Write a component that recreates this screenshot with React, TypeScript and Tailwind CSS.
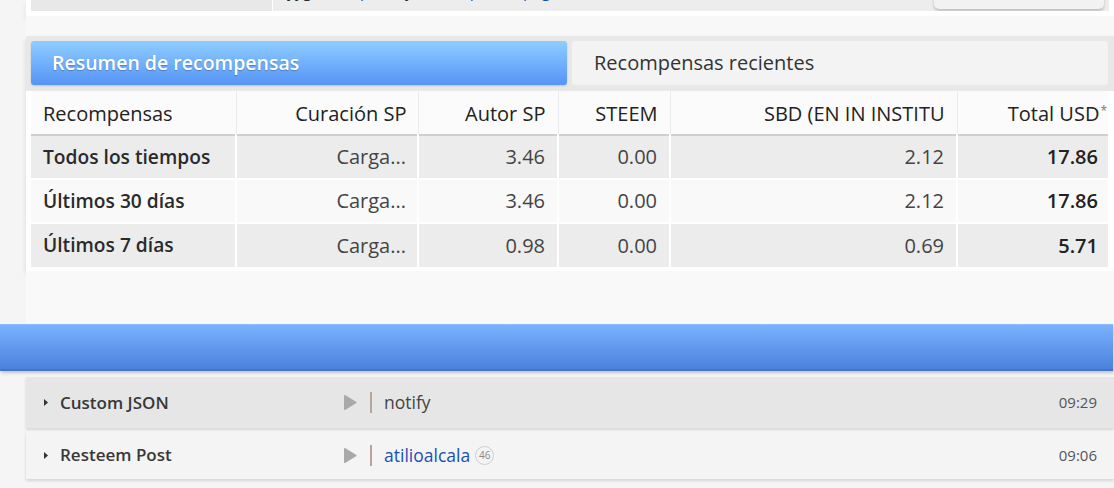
import React from "react";

const rows = [
  { label: "Todos los tiempos", cur: "Carga...", autor: "3.46", steem: "0.00", sbd: "2.12", total: "17.86", bg: "bg-[#ececec]" },
  { label: "Últimos 30 días", cur: "Carga...", autor: "3.46", steem: "0.00", sbd: "2.12", total: "17.86", bg: "bg-[#f9f9f9]" },
  { label: "Últimos 7 días", cur: "Carga...", autor: "0.98", steem: "0.00", sbd: "0.69", total: "5.71", bg: "bg-[#ececec]" },
];

const ops = [
  { name: "Custom JSON", target: "notify", link: false, time: "09:29", bg: "bg-[#e6e6e6]", h: "h-[51px]" },
  { name: "Resteem Post", target: "atilioalcala", link: true, rep: "46", time: "09:06", bg: "bg-[#f4f4f4]", h: "h-[48px]" },
];

function Caret() {
  return (
    <svg width="6" height="9" viewBox="0 0 6 9" className="shrink-0">
      <path d="M1 1 L5 4.5 L1 8 Z" fill="#333" />
    </svg>
  );
}

function Play() {
  return (
    <svg width="14" height="17" viewBox="0 0 14 17">
      <path d="M2 2 L12.5 8.5 L2 15 Z" fill="#a9a9a9" stroke="#a9a9a9" strokeWidth="2" strokeLinejoin="round" />
    </svg>
  );
}

export default function App() {
  return (
    <div className="min-h-screen w-[1114px] overflow-hidden bg-[#f5f5f5] font-['Open_Sans',sans-serif] text-[#333]">
      {/* top card, mostly scrolled away */}
      <div className="ml-[26px] w-[1088px] bg-white px-[5px] pb-[5px] shadow-[0_4px_6px_rgba(0,0,0,0.08)]">
        <div className="flex h-[11px] gap-px overflow-hidden">
          <div className="w-[241px] bg-[#e8e8e8]" />
          <div className="relative flex flex-1 bg-[#ededed]">
            <div className="-mt-[19px] ml-[14px] whitespace-nowrap text-[16px] leading-[20px] text-[#2a2a2a]">
              <span>yyg </span>
              <span className="text-[#b05a28]">(</span>
              <span className="text-[#1a4fb4]">hace poco,</span> y
              <span className="text-[#b05a28]"> (</span>
              <span className="text-[#1a4fb4]">recompensa, pago)</span>
              <span className="text-[#b05a28]"> ( </span>
              <span className="text-[#1a4fb4]">reciente)</span>
            </div>
            <div className="absolute right-[5px] bottom-[2px] h-[20px] w-[170px] rounded-b-[5px] bg-[#f2f2f2] shadow-[0_2px_3px_rgba(0,0,0,0.2)]" />
          </div>
        </div>
      </div>

      <div className="ml-[26px] h-[20px] bg-[#f8f8f8]" />

      {/* rewards card */}
      <div className="ml-[26px] w-[1088px] bg-white shadow-[0_3px_5px_rgba(0,0,0,0.12)]">
        <div className="flex gap-[5px] bg-[#e8e8e8] px-[5px] pt-[5px] pb-[6px]">
          <div className="flex h-[44px] w-[536px] items-center rounded-[3px] bg-gradient-to-b from-[#8fcdff] to-[#5694f6] pl-[21px] text-[19.5px] font-semibold text-white shadow-[0_1px_2px_rgba(0,0,0,0.15)] [text-shadow:0_1px_1px_rgba(0,0,0,0.25)]">
            Resumen de recompensas
          </div>
          <div className="mr-[1px] flex h-[44px] flex-1 items-center rounded-[3px] bg-[#f3f3f3] pl-[22px] text-[20px] text-[#333]">
            Recompensas recientes
          </div>
        </div>
        <div className="px-[5px] pb-[4px]">
          <table className="w-[1077px] table-fixed border-collapse text-[20px]">
            <colgroup>
              <col className="w-[205px]" />
              <col className="w-[182px]" />
              <col className="w-[140px]" />
              <col className="w-[112px]" />
              <col className="w-[287px]" />
              <col className="w-[151px]" />
            </colgroup>
            <thead>
              <tr className="h-[44px] border-b-2 border-[#cfcfcf] bg-[#fbfbfb] text-[#222]">
                <th className="border-r border-[#ececec] pt-[3px] pl-[12px] text-left font-normal">Recompensas</th>
                <th className="border-r border-[#ececec] pt-[3px] pr-[11px] text-right font-normal">Curación SP</th>
                <th className="border-r border-[#ececec] pt-[3px] pr-[12px] text-right font-normal">Autor SP</th>
                <th className="border-r border-[#ececec] pt-[3px] pr-[12px] text-right font-normal">STEEM</th>
                <th className="whitespace-nowrap border-r border-[#ececec] pt-[3px] pr-[12px] text-right font-normal">SBD (EN IN INSTITU</th>
                <th className="whitespace-nowrap pt-[3px] pr-[10px] text-right font-normal">
                  Total USD<sup className="-mr-[9px] ml-[1px] text-[12px] text-[#777]">*</sup>
                </th>
              </tr>
            </thead>
            <tbody>
              {rows.map((r) => (
                <tr key={r.label} className={`h-[44px] border-t-2 border-white ${r.bg}`}>
                  <td className="border-r-2 border-white pl-[12px] text-[19.2px] font-semibold text-[#2a2a2a]">{r.label}</td>
                  <td className="border-r-2 border-white pr-[11px] text-right text-[#444]">{r.cur}</td>
                  <td className="border-r-2 border-white pr-[12px] text-right text-[#444]">{r.autor}</td>
                  <td className="border-r-2 border-white pr-[12px] text-right text-[#444]">{r.steem}</td>
                  <td className="border-r-2 border-white pr-[12px] text-right text-[#444]">{r.sbd}</td>
                  <td className="pr-[10px] text-right font-semibold text-[#222]">{r.total}</td>
                </tr>
              ))}
            </tbody>
          </table>
        </div>
      </div>

      <div className="ml-[26px] h-[53px] bg-[#f9f9f9]" />

      {/* blue bar */}
      <div className="h-[47px] w-[1113px] border-t border-b-2 border-t-[#8bbcff] border-b-[#4375cf] bg-gradient-to-b from-[#7ab1ff] to-[#4c82dc] shadow-[1px_2px_3px_rgba(0,0,0,0.2)]" />

      {/* operations */}
      <div className="mt-[6px] ml-[26px] flex w-[1088px] flex-col gap-[3px]">
        {ops.map((o) => (
          <div key={o.name} className={`flex ${o.h} items-center ${o.bg} shadow-[0_2px_3px_rgba(0,0,0,0.13)]`}>
            <div className="ml-[17px] flex w-[300px] items-center gap-[11px]">
              <Caret />
              <span className="text-[17px] font-semibold text-[#383838]">{o.name}</span>
            </div>
            <Play />
            <div className="ml-[13px] h-[21px] w-[2px] bg-[#b8a597]" />
            <div className="ml-[12px] flex flex-1 items-center gap-[5px]">
              <span className={`text-[17.5px] ${o.link ? "text-[#1a4fb4]" : "text-[#444]"}`}>{o.target}</span>
              {o.rep && (
                <span className="flex h-[19px] w-[19px] items-center justify-center rounded-full border border-[#cfcfcf] text-[10px] text-[#888]">
                  {o.rep}
                </span>
              )}
            </div>
            <span className="mr-[17px] text-[15px] text-[#555]">{o.time}</span>
          </div>
        ))}
      </div>
    </div>
  );
}
